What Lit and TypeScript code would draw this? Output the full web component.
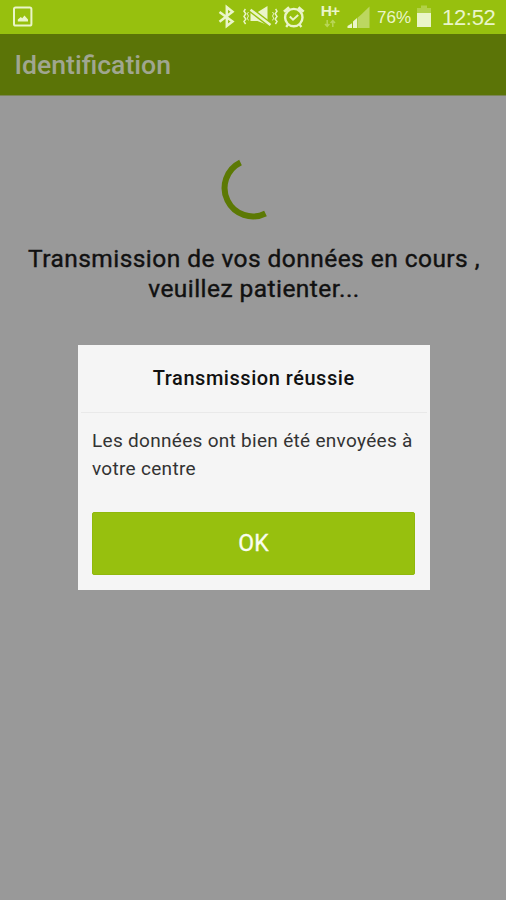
import { LitElement, html, css } from "lit";
import { customElement, property } from "lit/decorators.js";

@customElement("status-bar")
class StatusBar extends LitElement {
  static styles = css`
    :host {
      display: flex;
      align-items: flex-start;
      height: 34px;
      box-sizing: border-box;
      padding: 0 10px 0 12px;
      background: #97c00e;
      color: #eaf5c9;
      font-family: "Liberation Sans", Arial, sans-serif;
      overflow: hidden;
    }
    svg { display: block; flex: none; height: 34px; }
    .spacer { flex: 1; }
    .percent {
      width: 35px;
      margin: 0 5px 0 7px;
      font-size: 17px;
      line-height: 35px;
      white-space: nowrap;
    }
    .clock {
      width: 54px;
      margin-left: 10px;
      font-size: 22px;
      line-height: 35px;
      letter-spacing: -0.3px;
      white-space: nowrap;
    }
    .network {
      width: 20px;
      margin: 3px 7px 0 14px;
      display: flex;
      flex-direction: column;
      align-items: center;
    }
    .type { font-size: 15.5px; line-height: 16px; font-weight: 700; letter-spacing: -0.8px; }
    .network svg { height: 9px; }
  `;
  render() {
    return html`
      <svg width="22" height="34" viewBox="12 0 22 34" fill="none" stroke="#eaf5c9">
        <rect x="14" y="7.600" width="17.400" height="18" rx="1.600" stroke-width="2" />
        <path d="M17.800 21.400v-2l3-2.400 1.400 1.200 2.300-2.600 3.500 3.800v2z" fill="#eaf5c9" stroke="none" />
      </svg>
      <div class="spacer"></div>
      <svg width="18" height="34" viewBox="218 0 18 34" fill="none" stroke="#eaf5c9" stroke-width="2.500">
        <path d="M219.500 12l13 9.600-5.700 4.400V7.200l5.700 4.600-13 10" />
      </svg>
      <svg width="44" height="34" viewBox="236 0 44 34" fill="none" stroke="#eaf5c9">
        <path d="M245.400 9l-1.400 2.200 1.800 2.600-1.800 2.600 1.800 2.600-1.800 2.600 1.600 2.400M275.600 9l1.400 2.200-1.800 2.600 1.800 2.600-1.800 2.600 1.800 2.600-1.600 2.400" stroke-width="1.500" />
        <path d="M248.400 12l-1 1.800 1 2.200-1 2.200 1 2.200M272.600 12l1 1.800-1 2.200 1 2.200-1 2.200" stroke-width="1" />
        <path d="M250.500 12.500h6.500l10.500-6.500v19l-10-4h-7z" fill="#eaf5c9" stroke="none" />
        <path d="M250.500 9.700l20 15.400" stroke="#97c00e" stroke-width="5.200" />
        <path d="M250.500 9.700l20 15.400" stroke-width="2.500" />
      </svg>
      <svg width="26" height="34" viewBox="280 0 26 34" fill="none" stroke="#eaf5c9">
        <circle cx="293.800" cy="17.600" r="8.700" stroke-width="2.400" />
        <path d="M284 11.800l5.200-4.400M303.600 11.800l-5.200-4.400" stroke-width="2.800" />
        <path d="M289.800 16.500l3.200 3.200 5.200-4.700" stroke-width="2" />
        <path d="M288 24.500l-1.800 2.500M299.600 24.500l1.800 2.500" stroke-width="2.200" />
      </svg>
      <div class="network">
        <span class="type">H+</span>
        <svg width="12" height="9" viewBox="0 0 12 9" fill="none" stroke="#b9d658" stroke-width="1.500">
          <path d="M3.200 1v6M1 5l2.200 2.400L5.400 5M8.800 8V2M6.600 4l2.200-2.400L11 4" />
        </svg>
      </div>
      <svg width="23" height="34" viewBox="346 0 23 34">
        <path d="M346.500 28v-2l4.500-2.800V28z" fill="#eaf5c9" />
        <path d="M352 21.500l4-3.500v10h-4z" fill="#eaf5c9" />
        <path d="M356.500 17.700l3.500-3V28h-3.500z" fill="#bcd760" />
        <path d="M360 14.700l8.500-8.200V28H360z" fill="#bcd760" />
      </svg>
      <span class="percent">76%</span>
      <svg width="15" height="34" viewBox="417 0 15 34">
        <path d="M417 8h4V5.500h6V8h4v5h-14z" fill="#b2d148" />
        <path d="M417 13h14v14h-14z" fill="#eaf5c9" />
      </svg>
      <span class="clock">12:52</span>
    `;
  }
}

@customElement("message-dialog")
class MessageDialog extends LitElement {
  @property() heading = "";
  @property() message = "";
  static styles = css`
    :host {
      display: block;
      box-sizing: border-box;
      width: 351.5px;
      height: 244.5px;
      background: #f5f5f5;
      color: #111;
    }
    h2 {
      margin: 0 3px;
      height: 67px;
      border-bottom: 1px solid #e9e9e9;
      font-size: 20px;
      line-height: 67px;
      font-weight: 500;
      letter-spacing: 0.53px;
      text-align: center;
    }
    p {
      margin: 14px 0 0 14px;
      height: 85px;
      font-size: 19px;
      line-height: 28px;
      letter-spacing: 0.3px;
      color: #333;
      white-space: nowrap;
    }
    button {
      display: block;
      width: 323px;
      height: 63px;
      margin: 0 0 0 14px;
      padding: 0;
      border: 1px solid #90b80c;
      border-radius: 2px;
      background: #97c00e;
      color: #fafdf0;
      font: 400 23px Roboto, sans-serif;
      -webkit-text-stroke: 0.3px #fafdf0;
    }
  `;
  render() {
    const lines = this.message.split("|");
    return html`<h2>${this.heading}</h2>
      <p>${lines[0]}<br />${lines[1]}</p>
      <button>OK</button>`;
  }
}

@customElement("app-root")
class AppRoot extends LitElement {
  static styles = css`
    :host {
      display: flex;
      flex-direction: column;
      position: relative;
      width: 506px;
      height: 900px;
      background: #999;
      font-family: Roboto, sans-serif;
      overflow: hidden;
    }
    header {
      box-sizing: border-box;
      height: 62px;
      padding-left: 14.5px;
      background: #5b7407;
      border-bottom: 1px solid #7b8556;
      color: #a0a690;
      font-size: 26.6px;
      line-height: 61px;
      font-weight: 500;
    }
    main { display: flex; flex-direction: column; align-items: center; }
    .spinner { display: block; margin-top: 60px; }
    .progress {
      margin: 24px 0 0 2px;
      font-size: 24.5px;
      line-height: 29.5px;
      font-weight: 400;
      letter-spacing: 0.45px;
      -webkit-text-stroke: 0.4px #111;
      color: #111;
      text-align: center;
      white-space: nowrap;
    }
    message-dialog { position: absolute; left: 78px; top: 345px; }
  `;
  render() {
    return html`
      <status-bar></status-bar>
      <header>Identification</header>
      <main>
        <svg class="spinner" width="64" height="64" viewBox="221 156 64 64">
          <path d="M240.500 162.500A28.300 28.300 0 0 0 265.500 213.500" fill="none" stroke="#5c7904" stroke-width="6" />
        </svg>
        <p class="progress">Transmission de vos données en cours ,<br />veuillez patienter...</p>
      </main>
      <message-dialog
        heading="Transmission réussie"
        message="Les données ont bien été envoyées à|votre centre"
      ></message-dialog>
    `;
  }
}
